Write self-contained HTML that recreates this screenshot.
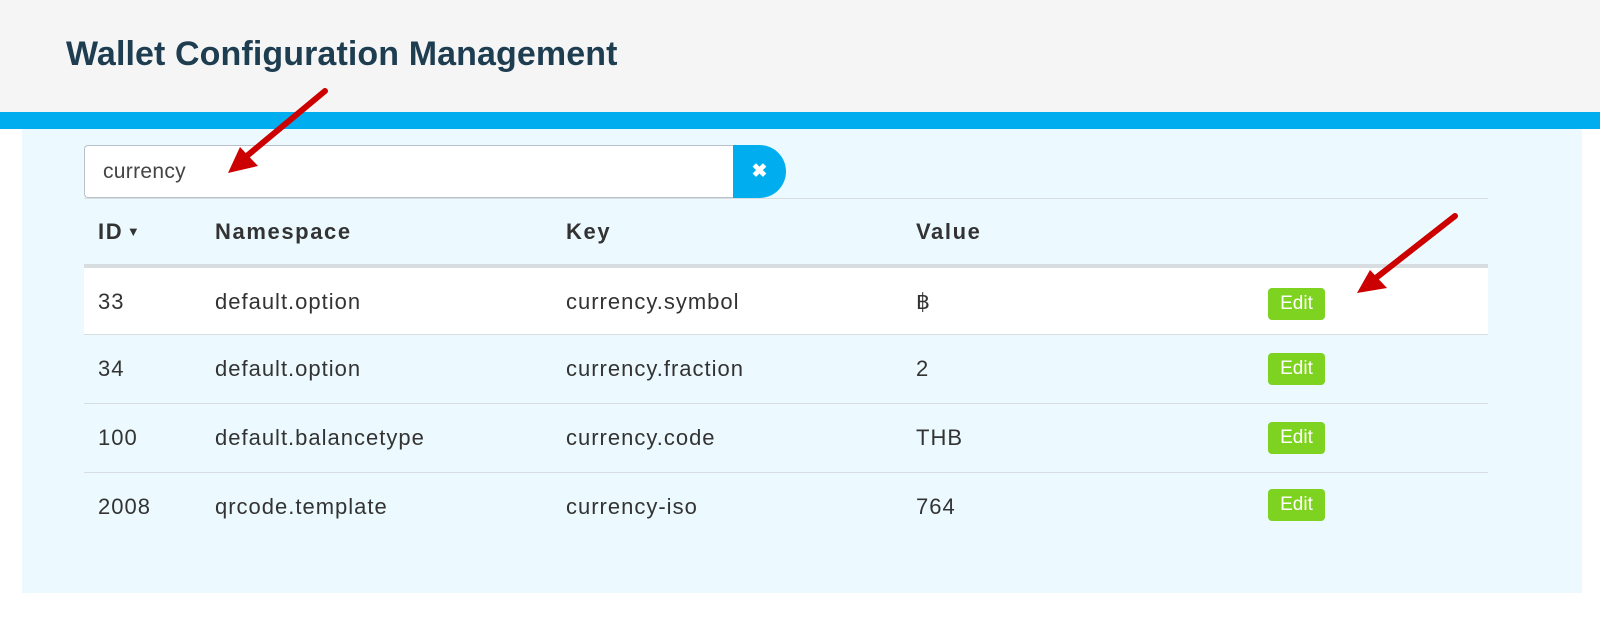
<!DOCTYPE html>
<html><head><style>
*{margin:0;padding:0;box-sizing:border-box}
body{width:1600px;height:628px;background:#fff;font-family:"Liberation Sans",Arial,sans-serif;position:relative;overflow:hidden}
.hdr{position:absolute;left:0;top:0;width:1600px;height:112px;background:#f5f5f5}
.hdr h1{position:absolute;left:66px;top:35px;font-size:34px;font-weight:bold;color:#1e3d50;letter-spacing:0.1px}
.bar{position:absolute;left:0;top:112px;width:1600px;height:17px;background:#00aeef}
.panel{position:absolute;left:22px;top:129px;width:1560px;height:464px;background:#ecfaff}
.inp{position:absolute;left:84px;top:145px;width:650px;height:53px;background:#fff;border:1px solid #b8c2cc;border-right:none;border-radius:4px 0 0 4px;font-size:21px;letter-spacing:0.3px;color:#444;padding:14px 0 0 18px}
.btn{position:absolute;left:733px;top:145px;width:53px;height:53px;background:#00aeef;border-radius:0 27px 27px 0;color:#fff;font-size:19px;font-weight:bold;text-align:center;line-height:53px}
.tline{position:absolute;left:84px;width:1404px;background:#d8dde2}
.row{position:absolute;left:84px;width:1404px;height:68px;font-size:22px;letter-spacing:1px;color:#333}
.row span{position:absolute;top:21px}
.th span{font-weight:bold;letter-spacing:1.6px}
.edit{position:absolute;left:1184px;width:57px;height:32px;background:#7ed321;border-radius:4px;color:#fff;font-size:19px;letter-spacing:0;text-align:center;line-height:32px}
</style></head><body>
<div class="hdr"><h1>Wallet Configuration Management</h1></div>
<div class="bar"></div>
<div class="panel"></div>
<div class="inp">currency</div>
<div class="btn">✖</div>
<div class="tline" style="top:198px;height:1px"></div>
<div class="row th" style="top:199px;height:65px"><span style="left:14px;top:20px">ID<span style="position:static;font-size:13px;vertical-align:3px;letter-spacing:0"> ▼</span></span><span style="left:131px;top:20px">Namespace</span><span style="left:482px;top:20px">Key</span><span style="left:832px;top:20px">Value</span></div>
<div class="tline" style="top:264px;height:4px"></div>
<div class="row" style="top:268px;height:66px;background:#fff"><span style="left:14px">33</span><span style="left:131px">default.option</span><span style="left:482px">currency.symbol</span><span style="left:832px">฿</span><div class="edit" style="top:20px">Edit</div></div>
<div class="tline" style="top:334px;height:1px"></div>
<div class="row" style="top:335px"><span style="left:14px">34</span><span style="left:131px">default.option</span><span style="left:482px">currency.fraction</span><span style="left:832px">2</span><div class="edit" style="top:18px">Edit</div></div>
<div class="tline" style="top:403px;height:1px"></div>
<div class="row" style="top:404px"><span style="left:14px">100</span><span style="left:131px">default.balancetype</span><span style="left:482px">currency.code</span><span style="left:832px">THB</span><div class="edit" style="top:18px">Edit</div></div>
<div class="tline" style="top:472px;height:1px"></div>
<div class="row" style="top:473px"><span style="left:14px">2008</span><span style="left:131px">qrcode.template</span><span style="left:482px">currency-iso</span><span style="left:832px">764</span><div class="edit" style="top:16px">Edit</div></div>
<svg width="1600" height="628" style="position:absolute;left:0;top:0">
<g stroke="#cc0000" stroke-width="6" stroke-linecap="round" fill="#cc0000">
<line x1="325" y1="91" x2="242" y2="160"/>
<line x1="1455" y1="216" x2="1372" y2="281"/>
</g>
<polygon points="228,173 240,147 258,166" fill="#cc0000"/>
<polygon points="1357,293 1370,270 1387,288" fill="#cc0000"/>
</svg>
</body></html>
